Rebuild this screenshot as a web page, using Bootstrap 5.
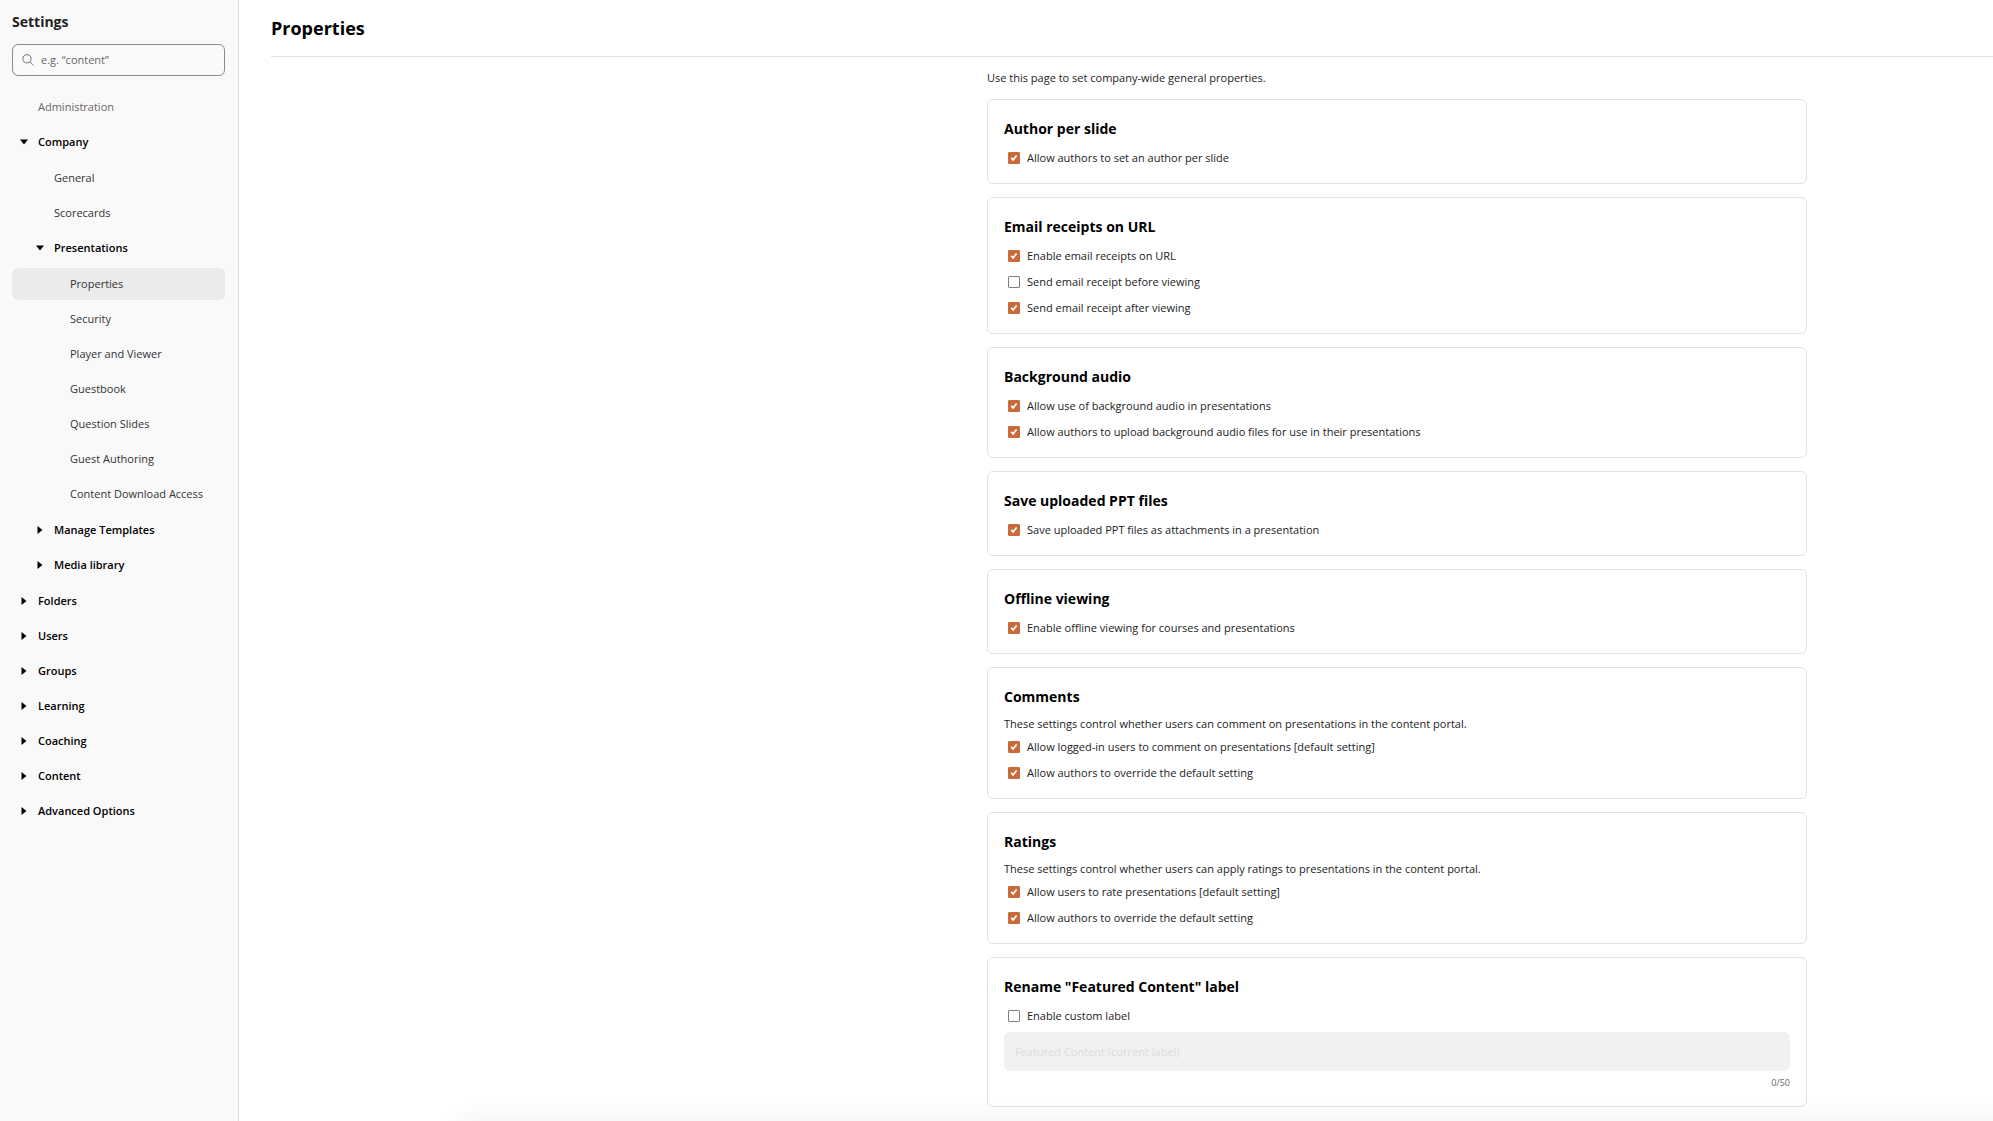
<!DOCTYPE html>
<html lang="en">
<head>
<meta charset="utf-8">
<meta name="viewport" content="width=device-width, initial-scale=1">
<title>Settings - Properties</title>
<link href="https://cdn.jsdelivr.net/npm/bootstrap@5.3.0/dist/css/bootstrap.min.css" rel="stylesheet">
<style>
  body { font-family: "Open Sans", "Noto Sans", sans-serif; font-size: 11px; line-height: 20px; color: #222; background: #fff; }

  /* Sidebar */
  .side-panel { flex: 0 0 239px; padding: 12px 13px 12px 12px; background: #f9f9f9; border-right: 1px solid #dcdcdc; }
  .side-title { font-size: 14px; line-height: 20px; font-weight: 700; color: #222; margin: 0 0 12px; }
  .search-box { height: 32px; padding-left: 9px; border: 1px solid #8c8c8c; border-radius: 6px; background: #fafafa; }
  .search-box svg { flex: none; }
  .search-box input { font-size: 11px; line-height: 20px; color: #222; padding: 0 8px 0 7px; }
  .search-box input::placeholder { color: #666; opacity: 1; }
  .tree { margin-top: 15px; }
  .tree ul { padding: 1px 0; }
  .node { display: flex; align-items: center; width: 100%; height: 32px; margin-bottom: 3px; border: 0; border-radius: 6px; background: transparent; color: #333; text-decoration: none; text-align: left; }
  .node:hover, .node.active { background: #ebebeb; }
  .node-parent { font-weight: 600; color: #000; }
  .node-parent svg { flex: none; margin-right: 10px; }
  .lvl-1 { padding: 0 0 0 26px; }
  .lvl-2 { padding: 0 0 0 42px; }
  .lvl-3 { padding: 0 0 0 58px; }
  .node-parent.lvl-1 { padding-left: 8px; }
  .node-parent.lvl-2 { padding-left: 24px; }
  .node-heading { color: #666; }

  /* Main area */
  .main-panel { padding-left: 32px; min-width: 0; }
  .page-head { padding: 15px 0; border-bottom: 1px solid #e2e2e2; }
  .page-head h1 { font-size: 18px; line-height: 26px; font-weight: 700; color: #000; margin: 0; }
  .settings-col { width: 100%; max-width: 820px; margin: 11px 186px 0 auto; }
  .intro-text { margin-bottom: 11px; }
  .setting { border: 1px solid #e2e2e2; border-radius: 6px; padding: 19px 16px 12px; margin-bottom: 13px; }
  .setting h2 { font-size: 14px; line-height: 20px; font-weight: 700; color: #000; margin: 0 0 6px; }
  .setting p { line-height: 21px; margin: 0; }
  .option { height: 26px; padding-left: 4px; gap: 7px; }
  .option .form-check-input { flex: none; width: 12px; height: 12px; margin: 0; border: 1px solid #808080; border-radius: 1px; }
  .option .form-check-input:checked { border-color: #c96a3b; background-color: #c96a3b; background-size: 12px 12px; background-position: center;
    background-image: url("data:image/svg+xml,%3Csvg xmlns='http://www.w3.org/2000/svg' viewBox='0 0 12 12'%3E%3Cpath d='M3.2 5.9l1.9 2L8.6 3.4' fill='none' stroke='%23fff' stroke-width='1.7'/%3E%3C/svg%3E"); }
  .label-input { height: 39px; margin-top: 3px; padding: 0 11px; font-size: 11px; border: 0; border-radius: 6px; }
  .label-input:disabled { background: #f1f1f1; }
  .label-input::placeholder { color: #dcdcdc; opacity: 1; }
  .counter { display: block; font-size: 9px; line-height: 23px; color: #666; text-align: right; }

  /* Soft shadow along the lower edge of the window */
  .edge-shadow { position: fixed; left: 454px; right: -40px; bottom: -20px; height: 20px; box-shadow: 0 0 30px rgba(0, 0, 0, .07); pointer-events: none; }
</style>
<script src="https://cdn.jsdelivr.net/npm/bootstrap@5.3.0/dist/js/bootstrap.bundle.min.js"></script>
</head>
<body>
<svg class="d-none" aria-hidden="true">
  <symbol id="open" viewBox="0 0 8 8"><path d="M0 1.5h8L4 6.5z"/></symbol>
  <symbol id="closed" viewBox="0 0 8 8"><path d="M1.5 0v8l5-4z"/></symbol>
</svg>
<div class="d-flex min-vh-100">
  <aside class="side-panel">
    <h2 class="side-title">Settings</h2>
    <div class="search-box d-flex align-items-center">
      <svg width="12" height="12" viewBox="0 0 12 12" fill="none" stroke="#777" aria-hidden="true"><circle cx="5" cy="4.8" r="4.1"/><path d="M7.9 7.8l3.6 3.6"/></svg>
      <input type="search" class="form-control border-0 bg-transparent shadow-none" placeholder="e.g. “content”" aria-label="Search settings">
    </div>
    <nav class="tree" aria-label="Settings">
      <a class="node lvl-1 node-heading" href="#">Administration</a>
      <button type="button" class="node node-parent lvl-1" aria-expanded="true"><svg width="8" height="8"><use href="#open"/></svg>Company</button>
      <ul class="list-unstyled mb-0">
        <li><a class="node lvl-2" href="#">General</a></li>
        <li><a class="node lvl-2" href="#">Scorecards</a></li>
        <li>
          <button type="button" class="node node-parent lvl-2" aria-expanded="true"><svg width="8" height="8"><use href="#open"/></svg>Presentations</button>
          <ul class="list-unstyled mb-0">
            <li><a class="node lvl-3 active" href="#" aria-current="page">Properties</a></li>
            <li><a class="node lvl-3" href="#">Security</a></li>
            <li><a class="node lvl-3" href="#">Player and Viewer</a></li>
            <li><a class="node lvl-3" href="#">Guestbook</a></li>
            <li><a class="node lvl-3" href="#">Question Slides</a></li>
            <li><a class="node lvl-3" href="#">Guest Authoring</a></li>
            <li><a class="node lvl-3" href="#">Content Download Access</a></li>
          </ul>
        </li>
        <li><button type="button" class="node node-parent lvl-2" aria-expanded="false"><svg width="8" height="8"><use href="#closed"/></svg>Manage Templates</button></li>
        <li><button type="button" class="node node-parent lvl-2" aria-expanded="false"><svg width="8" height="8"><use href="#closed"/></svg>Media library</button></li>
      </ul>
      <button type="button" class="node node-parent lvl-1" aria-expanded="false"><svg width="8" height="8"><use href="#closed"/></svg>Folders</button>
      <button type="button" class="node node-parent lvl-1" aria-expanded="false"><svg width="8" height="8"><use href="#closed"/></svg>Users</button>
      <button type="button" class="node node-parent lvl-1" aria-expanded="false"><svg width="8" height="8"><use href="#closed"/></svg>Groups</button>
      <button type="button" class="node node-parent lvl-1" aria-expanded="false"><svg width="8" height="8"><use href="#closed"/></svg>Learning</button>
      <button type="button" class="node node-parent lvl-1" aria-expanded="false"><svg width="8" height="8"><use href="#closed"/></svg>Coaching</button>
      <button type="button" class="node node-parent lvl-1" aria-expanded="false"><svg width="8" height="8"><use href="#closed"/></svg>Content</button>
      <button type="button" class="node node-parent lvl-1" aria-expanded="false"><svg width="8" height="8"><use href="#closed"/></svg>Advanced Options</button>
    </nav>
  </aside>

  <main class="main-panel flex-grow-1">
    <header class="page-head"><h1>Properties</h1></header>
    <div class="settings-col">
      <p class="intro-text">Use this page to set company-wide general properties.</p>

      <section class="setting">
        <h2>Author per slide</h2>
        <div class="option d-flex align-items-center"><input class="form-check-input" type="checkbox" id="author" checked><label for="author">Allow authors to set an author per slide</label></div>
      </section>

      <section class="setting">
        <h2>Email receipts on URL</h2>
        <div class="option d-flex align-items-center"><input class="form-check-input" type="checkbox" id="mail-on" checked><label for="mail-on">Enable email receipts on URL</label></div>
        <div class="option d-flex align-items-center"><input class="form-check-input" type="checkbox" id="mail-before"><label for="mail-before">Send email receipt before viewing</label></div>
        <div class="option d-flex align-items-center"><input class="form-check-input" type="checkbox" id="mail-after" checked><label for="mail-after">Send email receipt after viewing</label></div>
      </section>

      <section class="setting">
        <h2>Background audio</h2>
        <div class="option d-flex align-items-center"><input class="form-check-input" type="checkbox" id="audio-use" checked><label for="audio-use">Allow use of background audio in presentations</label></div>
        <div class="option d-flex align-items-center"><input class="form-check-input" type="checkbox" id="audio-upload" checked><label for="audio-upload">Allow authors to upload background audio files for use in their presentations</label></div>
      </section>

      <section class="setting">
        <h2>Save uploaded PPT files</h2>
        <div class="option d-flex align-items-center"><input class="form-check-input" type="checkbox" id="ppt" checked><label for="ppt">Save uploaded PPT files as attachments in a presentation</label></div>
      </section>

      <section class="setting">
        <h2>Offline viewing</h2>
        <div class="option d-flex align-items-center"><input class="form-check-input" type="checkbox" id="offline" checked><label for="offline">Enable offline viewing for courses and presentations</label></div>
      </section>

      <section class="setting">
        <h2>Comments</h2>
        <p>These settings control whether users can comment on presentations in the content portal.</p>
        <div class="option d-flex align-items-center"><input class="form-check-input" type="checkbox" id="comment-users" checked><label for="comment-users">Allow logged-in users to comment on presentations [default setting]</label></div>
        <div class="option d-flex align-items-center"><input class="form-check-input" type="checkbox" id="comment-authors" checked><label for="comment-authors">Allow authors to override the default setting</label></div>
      </section>

      <section class="setting">
        <h2>Ratings</h2>
        <p>These settings control whether users can apply ratings to presentations in the content portal.</p>
        <div class="option d-flex align-items-center"><input class="form-check-input" type="checkbox" id="rate-users" checked><label for="rate-users">Allow users to rate presentations [default setting]</label></div>
        <div class="option d-flex align-items-center"><input class="form-check-input" type="checkbox" id="rate-authors" checked><label for="rate-authors">Allow authors to override the default setting</label></div>
      </section>

      <section class="setting">
        <h2>Rename "Featured Content" label</h2>
        <div class="option d-flex align-items-center"><input class="form-check-input" type="checkbox" id="custom-label"><label for="custom-label">Enable custom label</label></div>
        <input type="text" class="form-control label-input" placeholder="Featured Content (current label)" aria-label="Custom label" maxlength="50" disabled>
        <span class="counter">0/50</span>
      </section>
    </div>
  </main>
</div>
<div class="edge-shadow"></div>
</body>
</html>
